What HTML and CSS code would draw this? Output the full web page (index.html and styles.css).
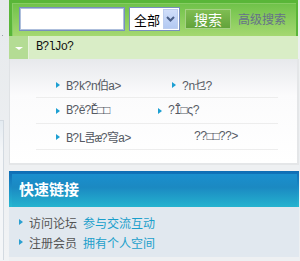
FILE: index.html
```html
<!DOCTYPE html>
<html>
<head>
<meta charset="utf-8">
<link rel="stylesheet" href="styles.css">
</head>
<body>
<div class="page">
  <div class="side">
    <span class="dot"></span>
    <div class="side-box"></div>
  </div>
  <div class="main">
    <div class="search-bar">
      <div class="search-inner">
        <div class="text-input"></div>
        <div class="select"><span class="select-text">全部</span><span class="select-btn"><svg width="9" height="6" viewBox="0 0 9 6"><path d="M1 1 L4.5 4.5 L8 1" fill="none" stroke="#4a5f88" stroke-width="2"/></svg></span></div>
        <div class="search-btn">搜索</div>
        <a class="adv">高级搜索</a>
      </div>
    </div>
    <div class="cat-bar">
      <div class="cat-toggle"><span class="tri-down"></span></div>
      <div class="cat-title">B?lJo?</div>
    </div>
    <div class="panel">
      <div class="rows">
        <div class="row">
          <div class="cell"><span class="bullet"></span>B?k?n伯a&gt;</div>
          <div class="cell r1"><span class="bullet"></span>?n乜?</div>
        </div>
        <div class="row">
          <div class="cell"><span class="bullet"></span>B?ě?Ě□□</div>
          <div class="cell"><span class="bullet"></span>?Î□ς?</div>
        </div>
        <div class="row">
          <div class="cell"><span class="bullet"></span>B?L쿰æ?穹a&gt;</div>
          <div class="cell r3">??□□??&gt;</div>
        </div>
      </div>
    </div>
    <div class="quick">
      <div class="quick-head"><div class="quick-inner">快速链接</div></div>
      <div class="quick-body">
        <div class="qrow"><span class="bullet"></span><span class="qlabel">访问论坛</span><a class="qlink">参与交流互动</a></div>
        <div class="qrow"><span class="bullet"></span><span class="qlabel">注册会员</span><a class="qlink">拥有个人空间</a></div>
      </div>
    </div>
  </div>
</div>
</body>
</html>
```
FILE: styles.css
```css
* { box-sizing: border-box; }
html, body { margin: 0; padding: 0; }
body {
  background: #eef0f2;
  font-family: "Liberation Sans", "Noto Sans CJK SC", sans-serif;
  font-size: 12px;
  width: 300px;
  height: 261px;
  overflow: hidden;
}
.page {
  display: flex;
  height: 261px;
}
.side {
  width: 9px;
  flex: none;
  background: linear-gradient(#e6e9ec, #f1f3f5);
  display: flex;
  flex-direction: column;
}
.dot {
  display: block;
  width: 1px;
  height: 1px;
  background: #9aa0a8;
  margin: 35px 0 0 2px;
}
.side-box {
  margin-top: 84px;
  width: 4px;
  height: 140px;
  border-top: 1px solid #d3dae1;
  border-right: 1px solid #d3dae1;
  background: linear-gradient(#e4ebf1, #f4f6f8 30px);
}
.main {
  width: 290px;
  flex: none;
}
.search-bar {
  height: 36px;
  margin-right: 1px;
  background: #59b638;
  padding: 3px 2px 0 3px;
}
.search-inner {
  height: 33px;
  background: linear-gradient(#70c24a, #a5d871);
  border-top: 1px solid #86cc62;
  border-left: 1px solid #88cd66;
  display: flex;
  align-items: center;
  padding: 0 0 0 6px;
}
.text-input {
  width: 106px;
  height: 24px;
  background: #fff;
  border: 1px solid #7890bd;
  box-shadow: inset 0 0 0 1px #aebfdc;
  margin-top: -2px;
}
.select {
  margin-left: 4px;
  margin-top: -2px;
  width: 51px;
  height: 24px;
  background: #fff;
  border: 1px solid #7890bd;
  display: flex;
  align-items: center;
  padding: 0 1px 0 4px;
}
.select-text {
  font-family: "Noto Sans CJK SC", sans-serif;
  font-size: 13px;
  color: #000;
  flex: 1;
}
.select-btn {
  width: 15px;
  height: 20px;
  background: linear-gradient(#d0defa, #b3c9f2);
  border: 1px solid #bccdee;
  display: flex;
  align-items: center;
  justify-content: center;
}
.search-btn {
  margin-left: 5px;
  margin-top: -2px;
  width: 46px;
  height: 20px;
  background: linear-gradient(#7fbd52, #62a33a);
  border: 1px solid #a4d084;
  color: #fff;
  font-family: "Noto Sans CJK SC", sans-serif;
  font-size: 14px;
  line-height: 18px;
  text-align: center;
}
.adv {
  margin-left: 7px;
  margin-top: -4px;
  color: #66708a;
  font-family: "Noto Sans CJK SC", sans-serif;
  font-size: 12px;
}
.cat-bar {
  height: 23px;
  margin-right: 1px;
  display: flex;
  background: #d9edc6;
}
.cat-toggle {
  width: 20px;
  background: #b4dc94;
  border-right: 1px solid #e6f3da;
  display: flex;
  align-items: center;
  justify-content: center;
}
.tri-down {
  width: 0;
  height: 0;
  border-left: 4px solid transparent;
  border-right: 4px solid transparent;
  border-top: 3px solid #fff;
  margin-top: 1px;
}
.cat-title {
  padding-left: 7px;
  line-height: 23px;
  color: #111;
  font-family: "Liberation Mono", "Noto Sans CJK SC", monospace;
  font-size: 12px;
  letter-spacing: -1px;
}
.panel {
  height: 106px;
  border-left: 1px solid #dfe2e5;
  border-right: 2px solid #e4e6e8;
  border-bottom: 2px solid #e4e6e8;
  background: linear-gradient(#e7e9ec, #fbfbfc 36px, #fff);
  padding: 13px 0 0 26px;
}
.rows {
  width: 242px;
}
.row {
  height: 26px;
  border-bottom: 1px solid #ededed;
  display: grid;
  grid-template-columns: 122px 1fr;
  align-items: center;
  color: #555a63;
  font-family: "Liberation Mono", "Noto Sans CJK SC", monospace;
  font-size: 12px;
  letter-spacing: -1px;
}
.row .cell { display: flex; align-items: center; white-space: nowrap; }
.row .cell:first-child { padding-left: 20px; }
.row .r1 { padding-left: 14px; }
.row .r3 { padding-left: 36px; }
.bullet {
  display: inline-block;
  width: 0;
  height: 0;
  border-top: 3px solid transparent;
  border-bottom: 3px solid transparent;
  border-left: 4px solid #1d9fd2;
  margin-right: 6px;
  flex: none;
}
.quick {
  margin-top: 6px;
}
.quick-head {
  height: 36px;
  background: linear-gradient(#0e6db5, #1a8bc5 45%, #27b9d1);
  padding: 3px 2px 0 3px;
}
.quick-inner {
  height: 33px;
  background: linear-gradient(#1a8fce, #1b89c2 40%, #25b3cf);
  padding-left: 7px;
  color: #fff;
  font-family: "Noto Sans CJK SC", sans-serif;
  font-weight: bold;
  font-size: 15px;
  line-height: 30px;
}
.quick-body {
  height: 50px;
  background: #e1e8ef;
  padding: 5px 0 0 10px;
}
.qrow {
  height: 20px;
  display: flex;
  align-items: center;
  font-family: "Noto Sans CJK SC", sans-serif;
  font-size: 12px;
}
.qrow .bullet { border-left-color: #2a9fd0; margin-right: 6px; }
.qlabel { color: #555; margin-right: 6px; }
.qlink { color: #1a9fcb; }
```
